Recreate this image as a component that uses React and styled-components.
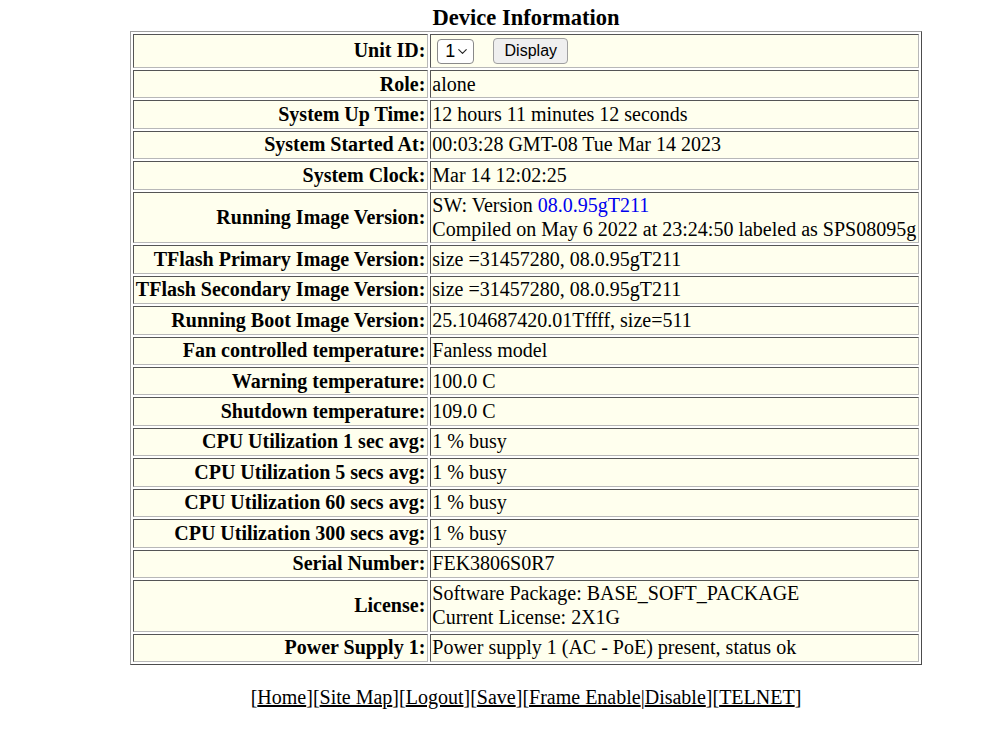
import React from 'react';
import styled, { createGlobalStyle } from 'styled-components';
import { ChevronDown } from 'lucide-react';

const rows = [
	{ label: 'Role:', value: ['alone'] },
	{ label: 'System Up Time:', value: ['12 hours 11 minutes 12 seconds'] },
	{ label: 'System Started At:', value: ['00:03:28 GMT-08 Tue Mar 14 2023'] },
	{ label: 'System Clock:', value: ['Mar 14 12:02:25'] },
	{ label: 'Running Image Version:', version: true },
	{ label: 'TFlash Primary Image Version:', value: ['size =31457280, 08.0.95gT211'] },
	{ label: 'TFlash Secondary Image Version:', value: ['size =31457280, 08.0.95gT211'] },
	{ label: 'Running Boot Image Version:', value: ['25.104687420.01Tffff, size=511'] },
	{ label: 'Fan controlled temperature:', value: ['Fanless model'] },
	{ label: 'Warning temperature:', value: ['100.0 C'] },
	{ label: 'Shutdown temperature:', value: ['109.0 C'] },
	{ label: 'CPU Utilization 1 sec avg:', value: ['1 % busy'] },
	{ label: 'CPU Utilization 5 secs avg:', value: ['1 % busy'] },
	{ label: 'CPU Utilization 60 secs avg:', value: ['1 % busy'] },
	{ label: 'CPU Utilization 300 secs avg:', value: ['1 % busy'] },
	{ label: 'Serial Number:', value: ['FEK3806S0R7'] },
	{ label: 'License:', value: ['Software Package: BASE_SOFT_PACKAGE', 'Current License: 2X1G'] },
	{ label: 'Power Supply 1:', value: ['Power supply 1 (AC - PoE) present, status ok'] },
]

const links = ['Home', 'Site Map', 'Logout', 'Save']

export default function App() {
	return (
		<>
			<GlobalStyle />
			<Page>
				<Title>Device Information</Title>
				<InfoTable>
					<tbody>
						<tr>
							<Label>Unit ID:</Label>
							<Value>
								<SelectWrap>
									<UnitSelect defaultValue="1">
										<option value="1">1</option>
									</UnitSelect>
									<Arrow size={15} strokeWidth={1.8} />
								</SelectWrap>
								<DisplayButton>Display</DisplayButton>
							</Value>
						</tr>
						{rows.map((row, i) => (
							<tr key={i}>
								<Label>{row.label}</Label>
								<Value>
									{row.version ? (
										<>
											SW: Version <Blue>08.0.95gT211</Blue>
											<br />
											Compiled on May 6 2022 at 23:24:50 labeled as SPS08095g
										</>
									) : (
										row.value.map((line, j) => (
											<React.Fragment key={j}>
												{j > 0 && <br />}
												{line}
											</React.Fragment>
										))
									)}
								</Value>
							</tr>
						))}
					</tbody>
				</InfoTable>
				<Footer>
					{links.map(l => (
						<React.Fragment key={l}>[<FootLink href="#">{l}</FootLink>]</React.Fragment>
					))}
					[<FootLink href="#">Frame Enable</FootLink>|<FootLink href="#">Disable</FootLink>]
					{'['}<FootLink href="#">TELNET</FootLink>]
				</Footer>
			</Page>
		</>
	);
}

const GlobalStyle = createGlobalStyle`
	body {
		margin: 0;
		background: #ffffff;
		font-family: "Liberation Serif", "Times New Roman", serif;
		color: #000;
	}
`

const Page = styled.div`
	display: flex;
	flex-direction: column;
	align-items: center;
	padding: 5px 0 0 53px;
	font-size: 20px;
`

const Title = styled.h3`
	margin: 0 0 1px;
	font-size: 22.5px;
	font-weight: bold;
	line-height: 25px;
`

const InfoTable = styled.table`
	border: 1px outset #a0a0a0;
	border-collapse: separate;
	border-spacing: 2px;
	font-size: 20px;
`

const Cell = styled.td`
	background: #ffffee;
	border: 1px solid;
	border-color: #555 #b8b8b8 #b8b8b8 #555;
	padding: 1.5px 1.5px;
	line-height: 23.4px;
	white-space: nowrap;
`

const Label = styled(Cell)`
	text-align: right;
	font-weight: bold;
`

const Value = styled(Cell)`
	text-align: left;
`

const Blue = styled.span`
	color: #0000ee;
`

const SelectWrap = styled.span`
	position: relative;
	display: inline-block;
	margin: 2px 19px 2px 5px;
	vertical-align: middle;
	line-height: 0;
`

const UnitSelect = styled.select`
	appearance: none;
	-webkit-appearance: none;
	font-family: "Liberation Sans", Arial, sans-serif;
	font-size: 18px;
	color: #000;
	width: 37px;
	height: 25px;
	padding: 0 0 0 7px;
	border: 1px solid #8a8a8a;
	border-radius: 4px;
	background: #fff;
`

const Arrow = styled(ChevronDown)`
	position: absolute;
	z-index: 1;
	right: 4px;
	top: 5px;
	color: #222;
	pointer-events: none;
`

const DisplayButton = styled.button`
	font-family: "Liberation Sans", Arial, sans-serif;
	font-size: 16px;
	color: #000;
	width: 75px;
	height: 26px;
	padding: 0;
	border: 1px solid #a0a0a0;
	border-radius: 4px;
	background: #efefef;
	vertical-align: middle;
`

const Footer = styled.p`
	margin: 21px 0 0;
	font-size: 20px;
	line-height: 23px;
	white-space: nowrap;
`

const FootLink = styled.a`
	color: #000;
	text-decoration: underline;
`
